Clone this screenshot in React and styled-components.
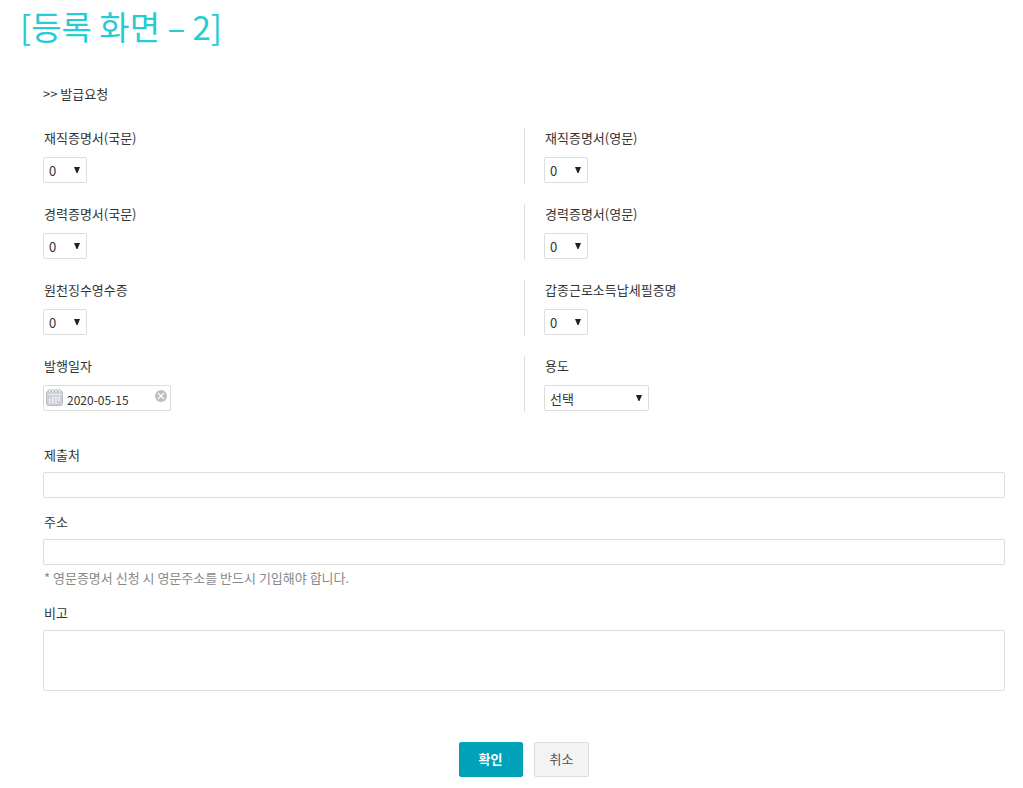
import React, { useState } from 'react';
import styled, { createGlobalStyle } from 'styled-components';

const GlobalStyle = createGlobalStyle`
  * {
    box-sizing: border-box;
  }

  body {
    margin: 0;
    background-color: #fff;
    color: #333;
    font-family: 'Noto Sans CJK KR', sans-serif;
    font-size: 13px;
    line-height: 20px;
  }

  button, input, select, textarea {
    font: inherit;
    color: inherit;
  }
`;

const Page = styled.main`
  padding: 6px 18px 10px 20px;
`;

const Title = styled.h1`
  margin: 0 0 38px;
  color: #27cbd3;
  font-size: 33px;
  font-weight: 400;
  line-height: 40px;
`;

const Form = styled.form`
  padding-left: 23px;
`;

const SectionTitle = styled.h2`
  margin: 0 0 24px;
  font-size: 13px;
  font-weight: 400;
`;

const Grid = styled.div`
  display: grid;
  grid-template-columns: 1fr 1fr;
  row-gap: 20px;
  margin-bottom: 33px;
`;

const Cell = styled.div`
  display: flex;
  flex-direction: column;
  align-items: flex-start;
  gap: 9px;
  padding-bottom: 1px;

  &:nth-child(even) {
    padding-left: 19px;
    border-left: 1px solid #ddd;
  }
`;

const Field = styled.div`
  display: flex;
  flex-direction: column;
  gap: 7px;
  margin-bottom: 14px;
`;

const Label = styled.label`
  padding-left: 1px;
`;

const Control = styled.div`
  display: flex;
  align-items: center;
  position: relative;
  width: ${(props) => props.$width};
  height: 26px;
  border: 1px solid #ddd;
  border-radius: 2px;
  background-color: #fff;
`;

const SelectBox = styled.select`
  appearance: none;
  width: 100%;
  height: 24px;
  padding: 2px 20px 0 5px;
  border: 0;
  background: transparent;
`;

const Arrow = styled.svg`
  position: absolute;
  top: 9px;
  right: 6px;
  pointer-events: none;
`;

const DateInput = styled.input`
  flex: 1;
  min-width: 0;
  height: 24px;
  padding: 2px 0 0 4px;
  border: 0;
  background: transparent;
  font-size: 12px;
`;

const ClearButton = styled.button`
  display: flex;
  padding: 0 3px 4px;
  border: 0;
  background: none;
  cursor: pointer;
`;

const CalendarIcon = styled.svg`
  margin: 0 0 2px 2px;
`;

const TextInput = styled.input`
  width: 100%;
  height: 26px;
  padding: 0 5px;
  border: 1px solid #ddd;
  border-radius: 2px;
`;

const TextArea = styled.textarea`
  display: block;
  width: 100%;
  height: 61px;
  padding: 5px;
  border: 1px solid #ddd;
  border-radius: 2px;
  resize: none;
`;

const Note = styled.p`
  margin: -11px 0 15px;
  padding-left: 1px;
  color: #888;
`;

const Buttons = styled.div`
  display: flex;
  justify-content: center;
  gap: 11px;
  padding-top: 37px;
`;

const Button = styled.button`
  height: 35px;
  padding: 0 ${(props) => (props.$primary ? '19px' : '15px')} 2px;
  border: 1px solid ${(props) => (props.$primary ? '#00a2b9' : '#ddd')};
  border-radius: 2px;
  background-color: ${(props) => (props.$primary ? '#00a2b9' : '#f3f3f3')};
  color: ${(props) => (props.$primary ? '#fff' : '#555')};
  font-weight: ${(props) => (props.$primary ? 700 : 400)};
  cursor: pointer;
`;

const Select = ({ id, width, options }) => (
  <Control $width={width}>
    <SelectBox id={id}>
      {options.map((option) => <option key={option}>{option}</option>)}
    </SelectBox>
    <Arrow width="6" height="6" viewBox="0 0 6 6" aria-hidden="true">
      <path d="M0 0h6L3.5 6h-1z" fill="#222" />
    </Arrow>
  </Control>
);

const DateField = ({ id }) => {
  const [date, setDate] = useState('2020-05-15');

  return (
    <Control $width="128px">
      <CalendarIcon width="17" height="17" viewBox="0 0 17 17" aria-hidden="true">
        <rect x="0.5" y="2" width="16" height="14.5" rx="2" fill="#cdd0d7" stroke="#b9bdc6" />
        <path d="M1 5.5h15" stroke="#eceef1" />
        <path d="M2.5 3V1.5a1 1 0 0 1 2 0V3M5.8 3V1.5a1 1 0 0 1 2 0V3M9.1 3V1.5a1 1 0 0 1 2 0V3M12.4 3V1.5a1 1 0 0 1 2 0V3" fill="#fff" stroke="#b1b5be" strokeWidth="0.8" />
        <path d="M6 8.5h8M3 11h11M3 13.5h8" stroke="#f4f5f7" strokeWidth="1.6" strokeDasharray="2 1" />
      </CalendarIcon>
      <DateInput id={id} type="text" value={date} onChange={(e) => setDate(e.target.value)} />
      <ClearButton type="button" aria-label="삭제" onClick={() => setDate('')}>
        <svg width="12" height="12" viewBox="0 0 12 12">
          <circle cx="6" cy="6" r="6" fill="#bfbfbf" />
          <path d="M3 3l6 6M9 3l-6 6" stroke="#fff" strokeWidth="1.1" />
        </svg>
      </ClearButton>
    </Control>
  );
};

const certificates = [
  { id: 'employ-ko', label: '재직증명서(국문)' },
  { id: 'employ-en', label: '재직증명서(영문)' },
  { id: 'career-ko', label: '경력증명서(국문)' },
  { id: 'career-en', label: '경력증명서(영문)' },
  { id: 'withholding', label: '원천징수영수증' },
  { id: 'tax-paid', label: '갑종근로소득납세필증명' },
];

const App = () => (
  <>
    <GlobalStyle />
    <Page>
      <Title>[등록 화면 – 2]</Title>
      <Form onSubmit={(e) => e.preventDefault()}>
        <SectionTitle>&gt;&gt; 발급요청</SectionTitle>
        <Grid>
          {certificates.map(({ id, label }) => (
            <Cell key={id}>
              <Label htmlFor={id}>{label}</Label>
              <Select id={id} width="44px" options={['0', '1', '2', '3']} />
            </Cell>
          ))}
          <Cell>
            <Label htmlFor="issue-date">발행일자</Label>
            <DateField id="issue-date" />
          </Cell>
          <Cell>
            <Label htmlFor="purpose">용도</Label>
            <Select id="purpose" width="105px" options={['선택']} />
          </Cell>
        </Grid>
        <Field>
          <Label htmlFor="submit-to">제출처</Label>
          <TextInput id="submit-to" type="text" />
        </Field>
        <Field>
          <Label htmlFor="address">주소</Label>
          <TextInput id="address" type="text" />
        </Field>
        <Note>* 영문증명서 신청 시 영문주소를 반드시 기입해야 합니다.</Note>
        <Field>
          <Label htmlFor="remark">비고</Label>
          <TextArea id="remark" />
        </Field>
        <Buttons>
          <Button type="submit" $primary>확인</Button>
          <Button type="button">취소</Button>
        </Buttons>
      </Form>
    </Page>
  </>
);

export default App;
